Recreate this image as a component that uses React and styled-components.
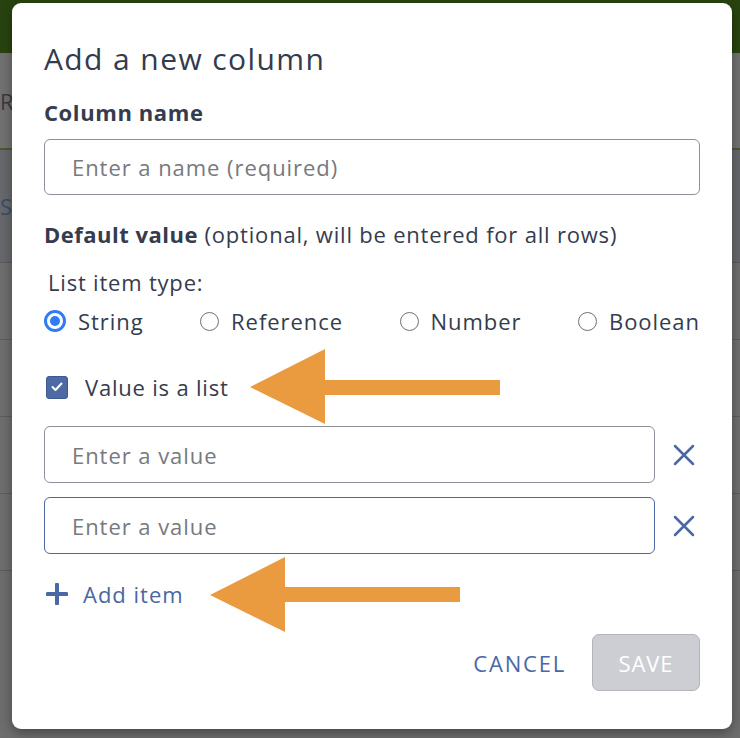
import React, { useState } from 'react';
import styled, { createGlobalStyle } from 'styled-components';

const GlobalStyle = createGlobalStyle`
    html, body {
        margin: 0;
        padding: 0;
        background: #6b6b6b;
    }
    * {
        box-sizing: border-box;
    }
`;

const Screen = styled.div`
    position: relative;
    width: 740px;
    height: 738px;
    overflow: hidden;
    font-family: "Open Sans", "Liberation Sans", sans-serif;
    background: #6d6d6d;
`;

const Header = styled.div`
    height: 53px;
    background: #28430f;
`;

const TabBar = styled.div`
    height: 97px;
    background: #717171;
    border-bottom: 2px solid #48592c;
    display: flex;
    align-items: center;
    color: #3a3a3a;
    font-size: 22px;
`;

const Toolbar = styled.div`
    height: 113px;
    background: #67686b;
    border-bottom: 1px solid #5a5a5a;
    display: flex;
    align-items: center;
    color: #3c4c6a;
    font-size: 22px;
`;

const TableRow = styled.div`
    height: 77px;
    border-bottom: 1px solid #5c5c5c;
    background: #6e6e6e;
`;

const Modal = styled.div`
    position: absolute;
    left: 12px;
    top: 3px;
    width: 720px;
    height: 726px;
    background: #fff;
    border-radius: 9px;
    box-shadow: 0 4px 12px rgba(0, 0, 0, 0.35);
    padding: 38px 32px 0 32px;
    display: flex;
    flex-direction: column;
    color: #343c4e;
    font-size: 22px;
    letter-spacing: 0.8px;
`;

const Title = styled.h2`
    margin: 0;
    font-size: 30px;
    font-weight: 500;
    line-height: 36px;
    letter-spacing: 1.4px;
    color: #333b4d;
`;

const FieldLabel = styled.div`
    margin-top: 21px;
    font-weight: 700;
    line-height: 28px;
    letter-spacing: 0.6px;
`;

const TextInput = styled.input`
    display: block;
    flex: 1;
    width: 100%;
    height: 57px;
    border: 1px solid ${p => (p.$focused ? '#4d68a3' : '#8d9098')};
    border-radius: 6px;
    padding: 0 27px;
    font-family: inherit;
    font-size: 22px;
    letter-spacing: 0.95px;
    color: #343c4e;
    outline: none;
    &::placeholder {
        color: #77797e;
    }
`;

const NameInput = styled(TextInput)`
    margin-top: 13px;
    flex: none;
    height: 56px;
`;

const DefaultLabel = styled.div`
    margin-top: 25px;
    line-height: 28px;
    b {
        font-weight: 700;
        letter-spacing: 0.5px;
    }
`;

const TypeLabel = styled.div`
    margin-top: 20px;
    padding-left: 4px;
    line-height: 28px;
`;

const RadioRow = styled.div`
    margin-top: 10px;
    display: flex;
    justify-content: space-between;
    align-items: center;
`;

const RadioOption = styled.label`
    display: flex;
    align-items: center;
    gap: 12px;
    line-height: 30px;
    letter-spacing: 0.95px;
    cursor: pointer;
`;

const RadioDot = styled.span`
    width: ${p => (p.$checked ? '22px' : '19px')};
    height: ${p => (p.$checked ? '22px' : '19px')};
    border-radius: 50%;
    border: ${p => (p.$checked ? '3px solid #2f7cf6' : '1.5px solid #6f6f6f')};
    display: flex;
    align-items: center;
    justify-content: center;
    &::after {
        content: '';
        display: ${p => (p.$checked ? 'block' : 'none')};
        width: 10px;
        height: 10px;
        border-radius: 50%;
        background: #2f7cf6;
    }
`;

const CheckRow = styled.label`
    margin-top: 36px;
    padding-left: 2px;
    display: flex;
    align-items: center;
    gap: 17px;
    line-height: 30px;
`;

const CheckBox = styled.span`
    width: 22px;
    height: 23px;
    border-radius: 3px;
    background: #4e6aa5;
    border: 1px solid #3f5890;
    display: flex;
    align-items: center;
    justify-content: center;
`;

const ValueList = styled.div`
    margin-top: 24px;
    display: flex;
    flex-direction: column;
    gap: 14px;
`;

const ValueRow = styled.div`
    display: flex;
    align-items: center;
    gap: 16px;
    padding-right: 3px;
`;

const RemoveButton = styled.button`
    width: 26px;
    height: 26px;
    padding: 0;
    border: none;
    background: none;
    display: flex;
    align-items: center;
    justify-content: center;
    cursor: pointer;
`;

const AddItem = styled.button`
    margin-top: 25px;
    align-self: flex-start;
    padding: 0 0 0 2px;
    border: none;
    background: none;
    display: flex;
    align-items: center;
    gap: 15px;
    font-family: inherit;
    font-size: 22px;
    letter-spacing: 1px;
    line-height: 30px;
    color: #4a67a5;
    cursor: pointer;
`;

const Footer = styled.div`
    margin-top: 25px;
    display: flex;
    justify-content: flex-end;
    align-items: center;
    gap: 26px;
`;

const CancelButton = styled.button`
    border: none;
    background: none;
    padding: 0;
    font-family: inherit;
    font-size: 22px;
    letter-spacing: 1.8px;
    color: #4a67a5;
    cursor: pointer;
`;

const SaveButton = styled.button`
    width: 108px;
    height: 57px;
    border: 1px solid #b3b5bb;
    border-radius: 7px;
    background: #cdced3;
    color: #fff;
    font-family: inherit;
    font-size: 22px;
    letter-spacing: 0.9px;
`;

const Arrow = styled.svg`
    position: absolute;
    left: 0;
    top: 0;
    pointer-events: none;
`;

const types = ['String', 'Reference', 'Number', 'Boolean'];

const XIcon = () => (
    <svg width="22" height="22" viewBox="0 0 22 22">
        <path d="M2 2 L20 20 M20 2 L2 20" stroke="#4b68a6" strokeWidth="2.5" strokeLinecap="round" />
    </svg>
);

const App = () => {
    const [type, setType] = useState('String');
    const [values] = useState(['', '']);

    return (
        <Screen>
            <GlobalStyle />
            <Header />
            <TabBar>R</TabBar>
            <Toolbar>SE</Toolbar>
            <TableRow />
            <TableRow />
            <TableRow />
            <TableRow />

            <Modal>
                <Title>Add a new column</Title>
                <FieldLabel>Column name</FieldLabel>
                <NameInput placeholder="Enter a name (required)" />
                <DefaultLabel>
                    <b>Default value</b> (optional, will be entered for all rows)
                </DefaultLabel>
                <TypeLabel>List item type:</TypeLabel>
                <RadioRow>
                    {types.map(t => (
                        <RadioOption key={t} onClick={() => setType(t)}>
                            <RadioDot $checked={type === t} />
                            {t}
                        </RadioOption>
                    ))}
                </RadioRow>
                <CheckRow>
                    <CheckBox>
                        <svg width="12" height="10" viewBox="0 0 12 10">
                            <path d="M1.5 5 L4.5 8 L10.5 1.5" stroke="#fff" strokeWidth="2" fill="none" strokeLinecap="round" strokeLinejoin="round" />
                        </svg>
                    </CheckBox>
                    Value is a list
                </CheckRow>
                <ValueList>
                    {values.map((v, i) => (
                        <ValueRow key={i}>
                            <TextInput placeholder="Enter a value" $focused={i === 1} />
                            <RemoveButton><XIcon /></RemoveButton>
                        </ValueRow>
                    ))}
                </ValueList>
                <AddItem>
                    <svg width="22" height="22" viewBox="0 0 22 22">
                        <path d="M11 1.5 V20.5 M1.5 11 H20.5" stroke="#4b68a6" strokeWidth="4" strokeLinecap="round" />
                    </svg>
                    Add item
                </AddItem>
                <Footer>
                    <CancelButton>CANCEL</CancelButton>
                    <SaveButton disabled>SAVE</SaveButton>
                </Footer>
            </Modal>

            <Arrow width="740" height="738" viewBox="0 0 740 738">
                <polygon points="250,387 325,349 325,380 500,380 500,395 325,395 325,424" fill="#ea9b40" />
                <polygon points="210,595 285,557 285,587 460,587 460,602 285,602 285,632" fill="#ea9b40" />
            </Arrow>
        </Screen>
    );
};

export default App;
